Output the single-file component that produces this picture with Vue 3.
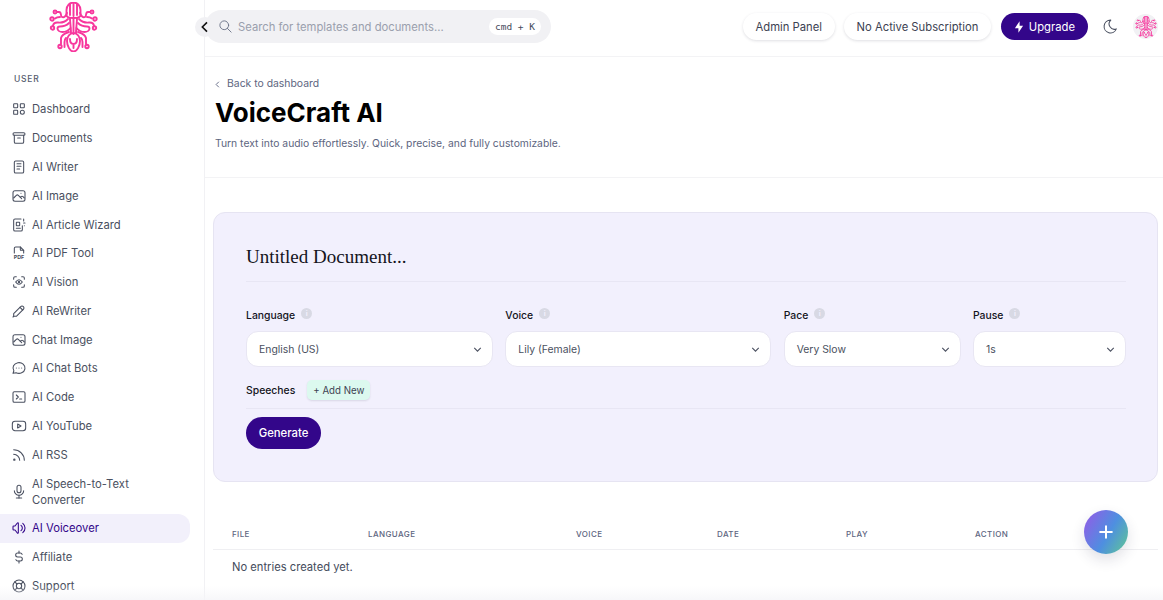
<script setup>
const photo = ['M15 8h.01', 'M4 15l4-4a3 5 0 0 1 3 0l5 5', 'M14 14l1-1a3 5 0 0 1 3 0l2 2']

const navItems = [
  { label: 'Dashboard', rects: [[4, 4, 6, 6, 1], [14, 4, 6, 6, 1], [4, 14, 6, 6, 1]], circles: [[17, 17, 3]] },
  { label: 'Documents', rects: [[3, 4, 18, 4, 2]], paths: ['M5 8v10a2 2 0 0 0 2 2h10a2 2 0 0 0 2-2V8', 'M10 12h4'] },
  { label: 'AI Writer', rects: [[5, 3, 14, 18, 2]], paths: ['M9 7h6', 'M9 11h6', 'M9 15h4'] },
  { label: 'AI Image', rects: [[3, 4, 18, 16, 3]], paths: photo },
  { label: 'AI Article Wizard', rects: [[8, 8, 5, 5, 0.5]], paths: ['M15 3H6a2 2 0 0 0-2 2v14a2 2 0 0 0 2 2h9a2 2 0 0 0 2-2v-6', 'M8 17h6', 'M19 3v3', 'M21 9h-2', 'M20 13h.01'] },
  { label: 'AI PDF Tool', pdf: true, paths: ['M14 3v4a1 1 0 0 0 1 1h4', 'M5 12V5a2 2 0 0 1 2-2h7l5 5v4'] },
  { label: 'AI Vision', circles: [[12, 12, 1]], paths: ['M4 8V6a2 2 0 0 1 2-2h2', 'M4 16v2a2 2 0 0 0 2 2h2', 'M16 4h2a2 2 0 0 1 2 2v2', 'M16 20h2a2 2 0 0 0 2-2v-2', 'M7 12c3.3-4.6 6.7-4.6 10 0-3.3 4.6-6.7 4.6-10 0'] },
  { label: 'AI ReWriter', paths: ['M4 20h4L18.5 9.5a2.83 2.83 0 1 0-4-4L4 16v4', 'M13.5 6.5l4 4', 'M3 21l1-1'] },
  { label: 'Chat Image', rects: [[3, 4, 18, 16, 3]], paths: photo },
  { label: 'AI Chat Bots', paths: ['M3 20l1.3-3.9A9 8 0 1 1 7.7 19L3 20', 'M12 12v.01', 'M8 12v.01', 'M16 12v.01'] },
  { label: 'AI Code', rects: [[3, 4, 18, 16, 2]], paths: ['M8 9l3 3-3 3', 'M13 15h3'] },
  { label: 'AI YouTube', rects: [[2, 5, 20, 14, 4]], paths: ['M10 9l5 3-5 3z'] },
  { label: 'AI RSS', circles: [[5, 19, 1]], paths: ['M4 4a16 16 0 0 1 16 16', 'M4 11a9 9 0 0 1 9 9'] },
  { label: 'AI Speech-to-Text Converter', rects: [[9, 2, 6, 11, 3]], paths: ['M5 10a7 7 0 0 0 14 0', 'M8 21h8', 'M12 17v4'] },
  { label: 'AI Voiceover', active: true, paths: ['M15 8a5 5 0 0 1 0 8', 'M17.7 5a9 9 0 0 1 0 14', 'M6 15H4a1 1 0 0 1-1-1v-4a1 1 0 0 1 1-1h2l3.5-4.5A.8.8 0 0 1 11 5v14a.8.8 0 0 1-1.5.5L6 15'] },
  { label: 'Affiliate', paths: ['M16.7 8A3 3 0 0 0 14 6h-4a3 3 0 0 0 0 6h4a3 3 0 0 1 0 6h-4a3 3 0 0 1-2.7-2', 'M12 3v3', 'M12 18v3'] },
  { label: 'Support', circles: [[12, 12, 4], [12, 12, 9]], paths: ['M15 15l3.35 3.35', 'M9 15l-3.35 3.35', 'M5.65 5.65L9 9', 'M18.35 5.65L15 9'] }
]

const fields = [
  { label: 'Language', value: 'English (US)' },
  { label: 'Voice', value: 'Lily (Female)' },
  { label: 'Pace', value: 'Very Slow' },
  { label: 'Pause', value: '1s' }
]

const columns = ['File', 'Language', 'Voice', 'Date', 'Play', 'Action']
</script>

<template>
  <div class="app">
    <svg class="defs" width="0" height="0" aria-hidden="true">
      <symbol id="octopus" viewBox="0 0 49 50">
        <g fill="none" stroke="#f7379d" stroke-width="1.900" stroke-linecap="round" stroke-linejoin="round">
          <path d="M17.500 13V8a7 7.500 0 0 1 14 0v5c0 2-2 3-7 3s-7-1-7-3z" />
          <path d="M21 2v11M24.500 1v13M28 2v11" />
          <path d="M21 16c0 5 1 10 1 15M28 16c0 5-1 10-1 15M24.500 16v16" />
          <path d="M24.500 31c-4 0-6.500 4-6.500 8 0 5 3 10.500 6.500 10.500S31 44 31 39c0-4-2.500-8-6.500-8z" />
          <path d="M21 37c0 3 1.500 5 3.500 5s3.500-2 3.500-5M24.500 42v4" />
          <g id="octopus-arm">
            <path d="M18 11c-1 3-3 5-5 4-2-1 0-5-3-5H8" />
            <circle cx="6" cy="10" r="1.500" />
            <path d="M11 15c-2 0-3 0-5 1.500" />
            <circle cx="3" cy="17" r="1.700" />
            <path d="M19 17c-3 3-6 4-10 3.500-3-.3-4.500.5-5 3" />
            <circle cx="3.500" cy="26" r="1.700" />
            <path d="M20 21c-3 3-6 3.500-9 3.500-1.500 0-2.500.5-2.500 2 0 2 2.500 3.500 5 3.500 3 0 6-1.500 8-4" />
            <path d="M20 30c-3 1-7 2-8 6v6" />
            <circle cx="11" cy="44.500" r="1.700" />
            <path d="M17 36c-1 1-1.500 2-1.500 4v5" />
          </g>
          <use href="#octopus-arm" transform="matrix(-1 0 0 1 49 0)" />
        </g>
      </symbol>
    </svg>

    <aside class="sidebar">
      <svg class="logo" width="49" height="50"><use href="#octopus" /></svg>
      <p class="nav-title">USER</p>
      <nav class="nav">
        <a v-for="item in navItems" :key="item.label" class="nav-item" :class="{ active: item.active }" href="#">
          <svg class="icon" viewBox="0 0 24 24">
            <rect v-for="r in item.rects" :key="r.join()" :x="r[0]" :y="r[1]" :width="r[2]" :height="r[3]" :rx="r[4]" />
            <circle v-for="c in item.circles" :key="c.join()" :cx="c[0]" :cy="c[1]" :r="c[2]" />
            <path v-for="d in item.paths" :key="d" :d="d" />
            <text v-if="item.pdf" class="pdf" x="12" y="21">PDF</text>
          </svg>
          <span>{{ item.label }}</span>
        </a>
      </nav>
    </aside>

    <main class="main">
      <header class="header">
        <button class="collapse">
          <svg viewBox="0 0 24 24" width="16" height="16"><path d="M15 5l-7 7 7 7" /></svg>
        </button>
        <div class="search">
          <svg class="search-icon" viewBox="0 0 24 24"><circle cx="10" cy="10" r="7" /><path d="M21 21l-6-6" /></svg>
          <span class="search-text">Search for templates and documents...</span>
          <kbd class="kbd">cmd + K</kbd>
        </div>
        <div class="actions">
          <a class="pill" href="#">Admin Panel</a>
          <a class="pill sub" href="#">No Active Subscription</a>
          <a class="upgrade" href="#">
            <svg viewBox="0 0 24 24" width="14" height="14"><path d="M13 2v8h6l-8 12v-8H5z" /></svg>
            Upgrade
          </a>
          <svg class="moon" viewBox="0 0 24 24"><path d="M12 3h.4a7.500 7.500 0 0 0 7.900 12.400A9 9 0 1 1 12 3z" /></svg>
          <span class="avatar"><svg width="22" height="22"><use href="#octopus" /></svg></span>
        </div>
      </header>

      <section class="page-head">
        <a class="back" href="#">
          <svg viewBox="0 0 24 24" width="11" height="11"><path d="M15 6l-6 6 6 6" /></svg>
          Back to dashboard
        </a>
        <h1>VoiceCraft AI</h1>
        <p>Turn text into audio effortlessly. Quick, precise, and fully customizable.</p>
      </section>

      <section class="card">
        <h2>Untitled Document...</h2>
        <div class="fields">
          <div v-for="field in fields" :key="field.label" class="field">
            <label>
              {{ field.label }}
              <span class="info">i</span>
            </label>
            <div class="select">
              <span>{{ field.value }}</span>
              <svg viewBox="0 0 24 24" width="13" height="13"><path d="M6 9l6 6 6-6" /></svg>
            </div>
          </div>
        </div>
        <div class="speeches">
          <span>Speeches</span>
          <button class="add">+ Add New</button>
        </div>
        <button class="generate">Generate</button>
      </section>

      <section class="table">
        <div class="thead">
          <span v-for="col in columns" :key="col">{{ col }}</span>
        </div>
        <p class="empty">No entries created yet.</p>
      </section>
    </main>

    <div class="fade"></div>
    <button class="fab">
      <svg viewBox="0 0 24 24" width="20" height="20"><path d="M12 5v14M5 12h14" /></svg>
    </button>
  </div>
</template>

<style>
html,
body {
  margin: 0;
  background: #fff;
  overflow: hidden;
}
</style>

<style scoped>
.app {
  position: relative;
  display: flex;
  height: 100vh;
  overflow: hidden;
  font-family: Inter, "Liberation Sans", sans-serif;
  color: #444b5c;
}

.defs {
  position: absolute;
}

/* sidebar */
.sidebar {
  flex: 0 0 204px;
  border-right: 1px solid #f1f1f4;
}

.logo {
  display: block;
  margin: 2px 0 0 49px;
}

.nav-title {
  margin: 21px 0 10px 14px;
  font-size: 8.500px;
  line-height: 12px;
  font-weight: 500;
  letter-spacing: 0.09em;
  color: #555c6e;
}

.nav {
  display: flex;
  flex-direction: column;
}

.nav-item {
  display: flex;
  align-items: center;
  gap: 5px;
  width: 190px;
  box-sizing: border-box;
  padding: 6.400px 14px 6.400px 11px;
  font-size: 11.250px;
  line-height: 16px;
  color: #4a5060;
  text-decoration: none;
  border-radius: 0 12px 12px 0;
}

.nav-item.active {
  background: #f2f0fb;
  color: #33068a;
}

.icon {
  flex: 0 0 16px;
  width: 16px;
  height: 16px;
  fill: none;
  stroke: currentColor;
  stroke-width: 1.600;
  stroke-linecap: round;
  stroke-linejoin: round;
}

.pdf {
  font-size: 8px;
  font-weight: 700;
  text-anchor: middle;
  fill: currentColor;
  stroke: none;
}

/* header */
.main {
  flex: 1;
  min-width: 0;
}

.header {
  position: relative;
  display: flex;
  align-items: center;
  justify-content: space-between;
  box-sizing: content-box;
  height: 53px;
  padding: 0 5px 3px 0;
  border-bottom: 1px solid #f3f3f5;
}

.collapse {
  position: absolute;
  left: -10px;
  top: 17px;
  display: flex;
  align-items: center;
  justify-content: center;
  width: 20px;
  height: 20px;
  padding: 0;
  border: 0;
  border-radius: 50%;
  background: #f1f1f4;
  z-index: 1;
}

.collapse path {
  fill: none;
  stroke: #111;
  stroke-width: 2.400;
}

.search {
  display: flex;
  align-items: center;
  box-sizing: border-box;
  width: 346px;
  height: 33px;
  padding: 0 10px 0 13px;
  border-radius: 17px;
  background: #f1f1f4;
}

.search-icon {
  width: 15px;
  height: 15px;
  margin-right: 5px;
  fill: none;
  stroke: #6c7388;
  stroke-width: 1.500;
  stroke-linecap: round;
}

.search-text {
  flex: 1;
  font-size: 11.250px;
  color: #9a9fad;
}

.kbd {
  padding: 2px 6px;
  border-radius: 9px;
  background: #fff;
  font-family: "DejaVu Sans Mono", "Liberation Mono", monospace;
  font-size: 9.500px;
  line-height: 13px;
  color: #444b5c;
}

.actions {
  display: flex;
  align-items: center;
}

.pill {
  height: 27px;
  margin-right: 9px;
  padding: 0 13px;
  border-radius: 14px;
  background: #fff;
  box-shadow: 0 1px 3px rgba(30, 30, 60, 0.14);
  font-size: 11.250px;
  line-height: 28px;
  color: #3c4252;
  text-decoration: none;
}

.pill.sub {
  padding: 0 12.500px;
}

.upgrade {
  display: flex;
  align-items: center;
  gap: 3px;
  height: 27px;
  margin-left: 1px;
  padding: 0 13px 0 11px;
  border-radius: 14px;
  background: #33068a;
  font-size: 11.250px;
  color: #fff;
  text-decoration: none;
}

.upgrade path {
  fill: #fff;
}

.moon {
  width: 17px;
  height: 17px;
  margin-left: 14px;
  fill: none;
  stroke: #4a5060;
  stroke-width: 1.500;
  stroke-linejoin: round;
}

.avatar {
  display: flex;
  align-items: center;
  justify-content: center;
  width: 25px;
  height: 25px;
  margin-left: 14px;
  border-radius: 50%;
  background: #f1f1f4;
}

/* page head */
.page-head {
  box-sizing: border-box;
  height: 121px;
  padding: 19px 10px 0;
  border-bottom: 1px solid #f3f3f5;
}

.back {
  display: flex;
  align-items: center;
  gap: 4px;
  font-size: 10.400px;
  line-height: 16px;
  color: #5d6580;
  text-decoration: none;
}

.back svg {
  margin-left: -3px;
}

.back path {
  fill: none;
  stroke: #5d6580;
  stroke-width: 2;
}

h1 {
  margin: 3px 0 0;
  font-size: 26px;
  line-height: 36px;
  font-weight: 700;
  color: #000;
}

.page-head p {
  margin: 4px 0 0;
  font-size: 10.350px;
  line-height: 16px;
  color: #5d6580;
}

/* generator card */
.card {
  box-sizing: border-box;
  height: 270px;
  margin: 34px 5px 0 8px;
  padding: 32px 31px 32px 32px;
  border: 1px solid #e6e4f2;
  border-radius: 12px;
  background: #f2f0fd;
}

h2 {
  margin: 0;
  padding-bottom: 12px;
  border-bottom: 1px solid #e8e6f4;
  font-family: "Liberation Serif", serif;
  font-size: 19px;
  line-height: 24px;
  font-weight: 400;
  color: #14141c;
}

.fields {
  display: grid;
  grid-template-columns: 247px 266px 177px 153px;
  justify-content: space-between;
  margin-top: 25px;
}

label {
  display: flex;
  align-items: center;
  gap: 6px;
  height: 17px;
  margin-bottom: 7px;
  font-size: 10.400px;
  font-weight: 500;
  color: #14141c;
}

.info {
  display: flex;
  align-items: center;
  justify-content: center;
  width: 11px;
  height: 11px;
  margin-top: -4px;
  border-radius: 50%;
  background: #d8d9e4;
  font-size: 7px;
  font-weight: 700;
  color: #f2f0fd;
}

.select {
  display: flex;
  align-items: center;
  justify-content: space-between;
  box-sizing: border-box;
  height: 36px;
  padding: 0 8px 0 12px;
  border: 1px solid #e8e6f3;
  border-radius: 12px;
  background: #fff;
  font-size: 10.400px;
  color: #4a5060;
}

.select path {
  fill: none;
  stroke: #4a5060;
  stroke-width: 2;
}

.speeches {
  display: flex;
  align-items: center;
  gap: 12px;
  height: 38px;
  padding-top: 1px;
  box-sizing: border-box;
  margin-top: 4px;
  border-bottom: 1px solid #e8e6f4;
  font-size: 10.400px;
  font-weight: 500;
  color: #14141c;
}

.add {
  height: 20px;
  padding: 0 6px;
  border: 0;
  border-radius: 5px;
  background: #dcf9ef;
  box-shadow: 0 1px 2px rgba(30, 30, 60, 0.12);
  font-family: inherit;
  font-size: 9.700px;
  color: #3c4252;
}

.generate {
  display: block;
  width: 75px;
  height: 32px;
  margin-top: 8px;
  padding: 0;
  border: 0;
  border-radius: 16px;
  background: #33068a;
  font-family: inherit;
  font-size: 11.300px;
  font-weight: 500;
  color: #fff;
}

/* table */
.table {
  margin: 40px 5px 0 8px;
}

.thead {
  display: grid;
  grid-template-columns: 136px 208px 141px 129px 129px 1fr;
  height: 27px;
  padding-left: 19px;
  border-bottom: 1px solid #efeff2;
  font-size: 8px;
  line-height: 25px;
  font-weight: 500;
  letter-spacing: 0.05em;
  text-transform: uppercase;
  color: #5d6580;
}

.empty {
  margin: 9px 0 0 19px;
  font-size: 11.200px;
  line-height: 16px;
  color: #444b5c;
}

/* overlays */
.fade {
  position: absolute;
  left: 0;
  right: 0;
  bottom: 0;
  height: 14px;
  background: linear-gradient(to bottom, rgba(245, 245, 248, 0), rgba(245, 245, 248, 0.8));
  pointer-events: none;
}

.fab {
  position: absolute;
  left: 1084px;
  top: 510px;
  display: flex;
  align-items: center;
  justify-content: center;
  width: 44px;
  height: 44px;
  padding: 0;
  border: 0;
  border-radius: 50%;
  background: linear-gradient(120deg, #8a62e6 10%, #4e8fe0 55%, #5ec39a 95%);
  box-shadow: 0 6px 14px rgba(40, 40, 80, 0.14);
}

.fab path {
  fill: none;
  stroke: #fff;
  stroke-width: 2.400;
  stroke-linecap: round;
}
</style>
